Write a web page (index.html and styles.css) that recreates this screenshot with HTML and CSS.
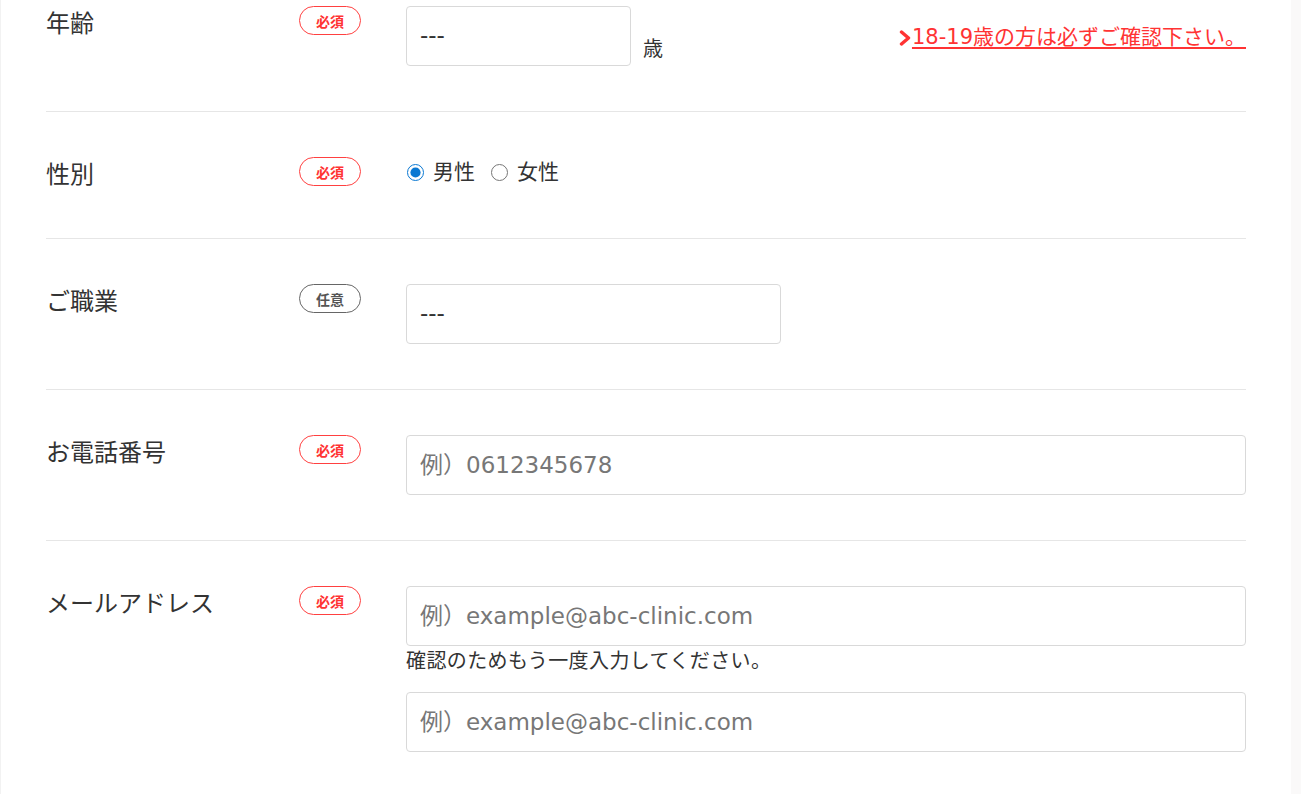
FILE: index.html
```html
<!DOCTYPE html>
<html lang="ja">
<head>
<meta charset="utf-8">
<title>フォーム</title>
<link rel="stylesheet" href="styles.css">
</head>
<body>
<div class="page">
  <div class="form">
    <div class="row row-first">
      <div class="label">年齢</div>
      <div class="badge-cell"><span class="badge req">必須</span></div>
      <div class="field field-age">
        <select class="select select-age"><option>---</option></select>
        <span class="unit">歳</span>
        <a class="notice" href="#">
          <svg class="chev" width="12" height="16" viewBox="0 0 12 16"><polyline points="2.5,2 9.5,8 2.5,14" fill="none" stroke="#f33" stroke-width="3.4" stroke-linecap="round" stroke-linejoin="round"/></svg>
          <span class="notice-text">18-19歳の方は必ずご確認下さい。</span>
        </a>
      </div>
    </div>

    <div class="row">
      <div class="label">性別</div>
      <div class="badge-cell"><span class="badge req">必須</span></div>
      <div class="field field-radio">
        <label class="radio"><input type="radio" name="sex" checked><span>男性</span></label>
        <label class="radio"><input type="radio" name="sex"><span>女性</span></label>
      </div>
    </div>

    <div class="row">
      <div class="label">ご職業</div>
      <div class="badge-cell"><span class="badge opt">任意</span></div>
      <div class="field">
        <select class="select select-job"><option>---</option></select>
      </div>
    </div>

    <div class="row">
      <div class="label">お電話番号</div>
      <div class="badge-cell"><span class="badge req">必須</span></div>
      <div class="field">
        <input class="text" type="text" placeholder="例）0612345678">
      </div>
    </div>

    <div class="row">
      <div class="label">メールアドレス</div>
      <div class="badge-cell"><span class="badge req">必須</span></div>
      <div class="field field-col">
        <input class="text" type="text" placeholder="例）example@abc-clinic.com">
        <p class="help">確認のためもう一度入力してください。</p>
        <input class="text" type="text" placeholder="例）example@abc-clinic.com">
      </div>
    </div>
  </div>
</div>
</body>
</html>
```

FILE: styles.css
```css
html, body {
  margin: 0;
  padding: 0;
}
body {
  background: #faf9f9;
  font-family: "DejaVu Sans", "Noto Sans CJK JP", sans-serif;
  color: #333;
}
.page {
  width: 1290px;
  min-height: 794px;
  background: #fff;
  border-left: 1px solid #f2f2f2;
  overflow: hidden;
}
.form {
  margin-left: 45px;
  width: 1200px;
}
.row {
  display: grid;
  grid-template-columns: 253px 107px 1fr;
  padding: 45px 0;
  border-top: 1px solid #e6e6e6;
}
.row-first {
  border-top: none;
  padding-top: 6px;
}
.label {
  font-family: "Noto Sans CJK JP", sans-serif;
  font-size: 24px;
  line-height: 32px;
  color: #333;
}
.badge-cell {
  display: flex;
  align-items: flex-start;
}
.badge {
  box-sizing: border-box;
  width: 62px;
  height: 29px;
  border-radius: 15px;
  display: flex;
  align-items: center;
  justify-content: center;
  font-family: "Noto Sans CJK JP", sans-serif;
  font-size: 14px;
  font-weight: 700;
  background: #fff;
}
.badge.req {
  border: 1px solid #ff4040;
  color: #ff3333;
}
.badge.opt {
  border: 1px solid #666;
  color: #555;
}
.field {
  display: flex;
  align-items: flex-start;
}
.field-age {
  align-items: flex-end;
}
.select {
  appearance: none;
  -webkit-appearance: none;
  box-sizing: border-box;
  height: 60px;
  border: 1px solid #d9d9d9;
  border-radius: 4px;
  background: #fff;
  padding: 0 13px 3px;
  font-family: inherit;
  font-size: 23px;
  color: #333;
  outline: none;
}
.select-age {
  width: 225px;
}
.select-job {
  width: 375px;
}
.unit {
  font-size: 20px;
  line-height: 26px;
  margin-left: 12px;
  padding-bottom: 4px;
  color: #333;
}
.notice {
  margin-left: auto;
  align-self: flex-start;
  margin-top: 17px;
  display: flex;
  align-items: center;
  gap: 1px;
  color: #ff3333;
  text-decoration: none;
}
.chev {
  display: block;
  margin-top: 1px;
}
.notice-text {
  font-size: 21px;
  line-height: 28px;
  text-decoration: underline;
  text-decoration-thickness: 2px;
  text-underline-offset: 3px;
  color: #ff3333;
}
.field-radio {
  align-items: center;
  height: 30px;
  padding-bottom: 6px;
  gap: 16px;
  padding-left: 1px;
}
.radio {
  display: flex;
  align-items: center;
  gap: 9px;
  font-size: 21px;
  line-height: 28px;
  color: #333;
}
.radio input {
  margin: 0;
  width: 17px;
  height: 17px;
  accent-color: #0a78d2;
}
.text {
  box-sizing: border-box;
  width: 100%;
  height: 60px;
  border: 1px solid #d9d9d9;
  border-radius: 4px;
  padding: 0 13px;
  font-family: inherit;
  font-size: 23px;
  color: #333;
  outline: none;
  background: #fff;
}
.text::placeholder {
  color: #777;
}
.field-col {
  flex-direction: column;
}
.help {
  margin: 0 0 16px;
  font-size: 20px;
  letter-spacing: 0.4px;
  line-height: 30px;
  color: #333;
}
```
